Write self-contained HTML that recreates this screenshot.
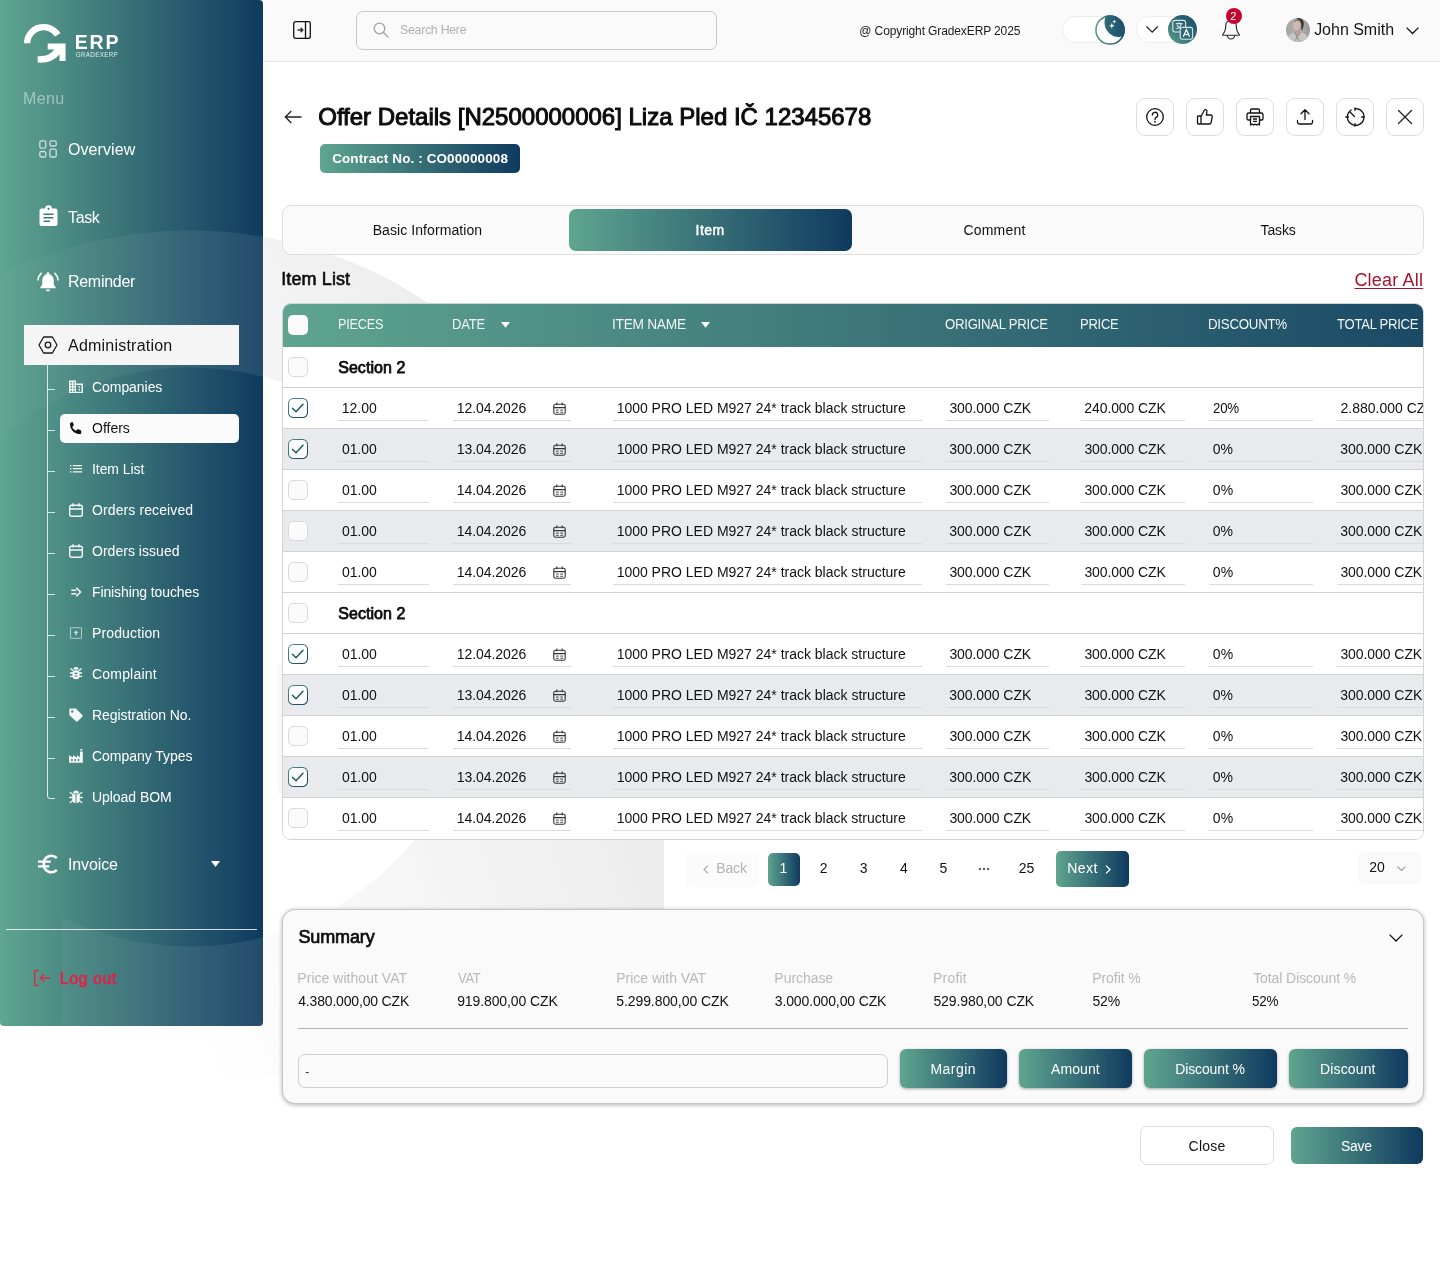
<!DOCTYPE html>
<html><head><meta charset="utf-8"><title>Offer Details</title>
<style>
*{box-sizing:border-box;margin:0;padding:0}
html,body{width:1440px;height:1267px;overflow:hidden;background:#fff}
#root{position:absolute;left:0;top:0;width:1440px;height:1267px;will-change:transform}
body{position:relative;font-family:"Liberation Sans",sans-serif;color:#111}
.a{position:absolute}
.t{position:absolute;white-space:nowrap;line-height:1}
.g{background:linear-gradient(90deg,#5fa58f 0%,#0f3a5f 100%)}
svg{position:absolute;overflow:visible}
#sb{left:0;top:0;width:263px;height:1026px;border-radius:0 4px 4px 4px;background:linear-gradient(90deg,#5fa58f 0%,#0f3a5f 100%);overflow:hidden}
#hd{left:263px;top:0;width:1177px;height:62px;background:#fafafa;border-bottom:1px solid #e6e6e6}
.ul{position:absolute;height:1px;background:#dbdbdb}
.cb{position:absolute;width:20px;height:20px;border:1px solid #dadada;border-radius:5px;background:#fafafa}
.cbc{position:absolute;width:20px;height:20px;border:1.200px solid transparent;border-radius:5.500px;background:linear-gradient(#fff,#fff) padding-box,linear-gradient(135deg,#4f9583 0%,#0f3a5f 100%) border-box}
.btn{position:absolute;border-radius:6px;box-shadow:0 1px 3px rgba(0,0,0,.35)}
.ib{position:absolute;width:38px;height:38px;border:1px solid #dcdcdc;border-radius:9px;background:#fff}
</style></head>
<body>
<div id="root">
<svg class="a" style="left:0;top:0" width="1440" height="1267" viewBox="0 0 1440 1267">
<defs><linearGradient id="wg" gradientUnits="userSpaceOnUse" x1="-30" y1="396" x2="529" y2="200"><stop offset="0" stop-color="#ffffff"/><stop offset="1" stop-color="#e9e9e9"/></linearGradient></defs>
<rect x="-300" y="150" width="1000" height="1000" fill="url(#wg)" clip-path="url(#wc)"/>
<clipPath id="wc"><path d="M23.90 43.25 A19.75 19.75 0 0 1 60.58 33.08 L55.14 36.35 A13.4 13.4 0 0 0 30.25 43.25 Z M37.70 62.08 A19.75 19.75 0 0 0 59.50 55.03 L59.50 61.00 L65.6 61 L65.6 43.6 L47.7 43.6 L47.7 49.6 L55.45 49.60 A13.4 13.4 0 0 1 37.70 55.26 Z" transform="translate(190 657) scale(21.6) translate(-43.65 -43.25)"/></clipPath>
</svg>
<div id="sb" class="a">
<svg style="left:0;top:0" width="263" height="1026" viewBox="0 0 263 1026"><defs><linearGradient id="wg2" gradientUnits="userSpaceOnUse" x1="-80" y1="0" x2="263" y2="0"><stop offset="0" stop-color="#fff" stop-opacity="0"/><stop offset="1" stop-color="#fff" stop-opacity="0.085"/></linearGradient><clipPath id="wc2"><path d="M23.90 43.25 A19.75 19.75 0 0 1 60.58 33.08 L55.14 36.35 A13.4 13.4 0 0 0 30.25 43.25 Z M37.70 62.08 A19.75 19.75 0 0 0 59.50 55.03 L59.50 61.00 L65.6 61 L65.6 43.6 L47.7 43.6 L47.7 49.6 L55.45 49.60 A13.4 13.4 0 0 1 37.70 55.26 Z" transform="translate(190 657) scale(21.6) translate(-43.65 -43.25)"/></clipPath></defs><rect x="-300" y="150" width="1000" height="1000" fill="url(#wg2)" clip-path="url(#wc2)"/></svg>
</div>
<svg style="left:23px;top:23px" width="44" height="41" viewBox="23 23 44 41"><g fill="#fff">
<path d="M23.9 43.200 A19.750 19.750 0 0 1 60.400 33.200 L55.000 36.400 A13.500 13.500 0 0 0 30.200 43.200 Z"/>
<path d="M47.700 43.600 H65.600 V61 H59.500 V54.500 Q52 63.500 37.700 62.600 V56.200 Q49 57 54.200 49.600 H47.700 Z"/>
</g></svg>
<div class="t" style="left:74.86px;top:32.55px;font-size:19.5px;color:#fff;font-weight:bold;letter-spacing:1.736px;">ERP</div>
<div class="t" style="left:75.76px;top:52.45px;font-size:6.3px;color:rgba(255,255,255,.85);letter-spacing:0.310px;">GRADEXERP</div>
<div class="t" style="left:22.99px;top:91.12px;font-size:16px;color:rgba(255,255,255,.45);letter-spacing:0.347px;">Menu</div>
<svg style="left:39px;top:140px" width="18" height="18" viewBox="0 0 18 18" fill="none" stroke="rgba(255,255,255,.72)" stroke-width="1.300"><rect x=".8" y=".8" width="6" height="7.400" rx="1.600"/><rect x="11" y=".8" width="6.200" height="5.200" rx="1.600"/><rect x=".8" y="11.500" width="6" height="5.500" rx="1.600"/><rect x="11" y="9.200" width="6.200" height="7.800" rx="1.600"/></svg>
<div class="t" style="left:68.00px;top:141.71px;font-size:16px;color:#fff;letter-spacing:0.079px;">Overview</div>
<svg style="left:38.500px;top:206px" width="19" height="20" viewBox="0 0 19 20"><path fill="#fff" d="M2.500 2.600h3.600a3.400 3.400 0 0 1 6.800 0h3.600a2 2 0 0 1 2 2V18a2 2 0 0 1-2 2h-14a2 2 0 0 1-2-2V4.600a2 2 0 0 1 2-2z"/><circle cx="9.500" cy="2.800" r="1.100" fill="#3b7a79"/><g stroke="#3b7a79" stroke-width="1.600"><path d="M4.500 8.300h10M4.500 11.800h10M4.500 15.300h6.500"/></g></svg>
<div class="t" style="left:68.00px;top:210.12px;font-size:16px;color:#fff;letter-spacing:-0.348px;">Task</div>
<svg style="left:37px;top:270.600px" width="22" height="22" viewBox="0 0 22 21" preserveAspectRatio="none"><g fill="#fff"><path d="M11 1.200c.8 0 1.400.6 1.400 1.400v.5c2.600.7 4.400 3 4.400 5.900v4.200l1.900 2.200v1H3.300v-1l1.900-2.200V9c0-2.900 1.800-5.200 4.400-5.900v-.5c0-.8.600-1.400 1.400-1.400z"/><path d="M9 17.600h4a2 2 0 0 1-4 0z"/></g><g fill="none" stroke="#fff" stroke-width="1.500" stroke-linecap="round"><path d="M4.300 2.200C2.400 3.700 1.200 6 1 8.600"/><path d="M17.700 2.200c1.900 1.500 3.100 3.800 3.300 6.400"/></g></svg>
<div class="t" style="left:68.00px;top:273.71px;font-size:16px;color:#fff;letter-spacing:-0.290px;">Reminder</div>
<div class="a" style="left:24px;top:325px;width:215px;height:40px;background:#f5f5f5"></div>
<svg style="left:38px;top:336px" width="20" height="18" viewBox="0 0 20 18" fill="none" stroke="#1b1b1b" stroke-width="1.300" stroke-linejoin="round"><path d="M5.600 1 h8.800 l4.600 8 l-4.600 8 h-8.800 l-4.600 -8 z"/><circle cx="10" cy="9" r="2.800"/></svg>
<div class="t" style="left:68.00px;top:338.12px;font-size:16px;color:#161616;letter-spacing:0.219px;">Administration</div>
<div class="a" style="left:47px;top:365px;width:1px;height:430px;background:rgba(255,255,255,.78)"></div>
<div class="a" style="left:47px;top:792px;width:8px;height:7px;border-left:1px solid rgba(255,255,255,.78);border-bottom:1px solid rgba(255,255,255,.78);border-radius:0 0 0 3px"></div>
<div class="a" style="left:47px;top:389px;width:8px;height:1px;background:rgba(255,255,255,.78)"></div>
<svg style="left:69px;top:380.0px" width="14" height="14" viewBox="0 0 14 14"><path fill="#f3f8f6" d="M0 .5h7v3h7V13H0zM1.500 2v1.500H3V2zm2.800 0v1.500h1.500V2zM1.500 4.800v1.500H3V4.800zm2.800 0v1.500h1.500V4.800zM1.500 7.600v1.500H3V7.600zm2.800 0v1.500h1.500V7.600zm-2.800 2.800v1.500H3v-1.500zm2.800 0v1.500h1.500v-1.500zM7 5v6.800h5.500V5zm2.500 1.200h1.500v1.500H9.500zm0 2.800h1.500v1.500H9.500z"/></svg>
<div class="t" style="left:92.00px;top:380.45px;font-size:14px;color:#fff;letter-spacing:-0.057px;">Companies</div>
<div class="a" style="left:60px;top:414px;width:179px;height:29px;background:#fbfbfb;border-radius:5px"></div>
<div class="a" style="left:47px;top:430px;width:8px;height:1px;background:rgba(255,255,255,.78)"></div>
<svg style="left:69px;top:421.0px" width="14" height="14" viewBox="0 0 14 14"><path fill="#111" d="M2.900 .8c.4 0 .7.200.9.600l.9 2.300c.150.400 0 .8-.300 1.100L3.200 6c.8 1.700 2.100 3 3.800 3.800l1.200-1.200c.3-.3.700-.4 1.100-.3l2.300.9c.4.150.6.500.6.900v1.800c0 .6-.5 1.100-1.100 1.100C5.500 13 1 8.500 1 2.900c0-.6.500-1.100 1.100-1.100z"/></svg>
<div class="t" style="left:92.00px;top:421.45px;font-size:14px;color:#111;">Offers</div>
<div class="a" style="left:47px;top:471px;width:8px;height:1px;background:rgba(255,255,255,.78)"></div>
<svg style="left:69px;top:462.0px" width="14" height="14" viewBox="0 0 14 14"><g stroke="#f3f8f6" stroke-width="1.300"><path d="M1 3.600h1.400M3.800 3.600h9.300M1 6.700h1.400M3.800 6.700h9.300M1 9.800h1.400M3.800 9.800h9.300"/></g></svg>
<div class="t" style="left:92.00px;top:462.45px;font-size:14px;color:#fff;letter-spacing:-0.074px;">Item List</div>
<div class="a" style="left:47px;top:512px;width:8px;height:1px;background:rgba(255,255,255,.78)"></div>
<svg style="left:69px;top:503.0px" width="14" height="14" viewBox="0 0 14 14"><g fill="none" stroke="#f3f8f6" stroke-width="1.400"><rect x=".7" y="2.200" width="12.600" height="11" rx="1.800"/><path d="M.7 6h12.600M4 .2v3.300M10 .2v3.300"/></g></svg>
<div class="t" style="left:92.00px;top:503.45px;font-size:14px;color:#fff;letter-spacing:0.105px;">Orders received</div>
<div class="a" style="left:47px;top:553px;width:8px;height:1px;background:rgba(255,255,255,.78)"></div>
<svg style="left:69px;top:544.0px" width="14" height="14" viewBox="0 0 14 14"><g fill="none" stroke="#f3f8f6" stroke-width="1.400"><rect x=".7" y="2.200" width="12.600" height="11" rx="1.800"/><path d="M.7 6h12.600M4 .2v3.300M10 .2v3.300"/></g></svg>
<div class="t" style="left:92.00px;top:544.45px;font-size:14px;color:#fff;letter-spacing:0.028px;">Orders issued</div>
<div class="a" style="left:47px;top:594px;width:8px;height:1px;background:rgba(255,255,255,.78)"></div>
<svg style="left:69px;top:585.0px" width="14" height="14" viewBox="0 0 14 14"><g fill="none" stroke="#f3f8f6" stroke-width="1.600"><path d="M2.300 5.300h5M2.300 8.700h5M7.300 2.800 11.500 7l-4.200 4.200" stroke-linejoin="round"/></g></svg>
<div class="t" style="left:92.00px;top:585.45px;font-size:14px;color:#fff;letter-spacing:-0.111px;">Finishing touches</div>
<div class="a" style="left:47px;top:635px;width:8px;height:1px;background:rgba(255,255,255,.78)"></div>
<svg style="left:69px;top:626.0px" width="14" height="14" viewBox="0 0 14 14"><g fill="none" stroke="#f3f8f6" stroke-opacity=".6" stroke-width="1.100"><rect x="1.500" y="1.800" width="11" height="10.400" rx=".8"/></g><path fill="#f3f8f6" fill-opacity=".8" d="M7 4.500 9.300 7H7.700v2.200H6.300V7H4.700z"/></svg>
<div class="t" style="left:92.00px;top:626.45px;font-size:14px;color:#fff;letter-spacing:0.135px;">Production</div>
<div class="a" style="left:47px;top:676px;width:8px;height:1px;background:rgba(255,255,255,.78)"></div>
<svg style="left:69px;top:667.0px" width="14" height="14" viewBox="0 0 14 14"><g fill="#f3f8f6"><path d="M4.300 2.600a2.700 2.700 0 0 1 5.400 0z"/><rect x="3.400" y="3.300" width="7.200" height="9" rx="3.300"/></g><g stroke="#f3f8f6" stroke-width="1.300" stroke-linecap="round"><path d="M1.800 1.800l2 1.600M12.200 1.800l-2 1.600M1.400 6h2.200M12.600 6h-2.200M1.400 9.300h2.200M12.600 9.300h-2.200"/></g><g stroke="#3f7f7a" stroke-width="1.100"><path d="M5.600 6.400h2.800M5.600 9h2.800"/></g></svg>
<div class="t" style="left:92.00px;top:667.45px;font-size:14px;color:#fff;letter-spacing:0.195px;">Complaint</div>
<div class="a" style="left:47px;top:717px;width:8px;height:1px;background:rgba(255,255,255,.78)"></div>
<svg style="left:69px;top:708.0px" width="14" height="14" viewBox="0 0 14 14"><path fill="#f3f8f6" d="M.3 1.700C.3 1 .8.500 1.500.500h4.800c.4 0 .7.150 1 .4l6 6c.5.500.5 1.300 0 1.800l-4.600 4.600c-.5.500-1.300.5-1.800 0L.8 7.400c-.3-.3-.5-.6-.5-1zM3.300 2.300a1.200 1.200 0 1 0 0 2.400 1.200 1.200 0 0 0 0-2.400z"/></svg>
<div class="t" style="left:92.00px;top:708.45px;font-size:14px;color:#fff;letter-spacing:-0.067px;">Registration No.</div>
<div class="a" style="left:47px;top:758px;width:8px;height:1px;background:rgba(255,255,255,.78)"></div>
<svg style="left:69px;top:749.0px" width="14" height="14" viewBox="0 0 14 14"><path fill="#f3f8f6" d="M0 13.800V6.300l4 2.200V6.300l4 2.200V6.300L11 8V2.500h2.800v11.300zM2.200 10v2h1.500v-2zm3.300 0v2H7v-2zm3.300 0v2h1.500v-2z"/><rect x="11.200" y="0" width="2.200" height="1.600" rx=".5" fill="#f3f8f6"/></svg>
<div class="t" style="left:92.00px;top:749.45px;font-size:14px;color:#fff;letter-spacing:-0.042px;">Company Types</div>
<svg style="left:69px;top:790.0px" width="14" height="14" viewBox="0 0 14 14"><g fill="#f3f8f6"><path d="M4 3.500a3 3 0 0 1 6 0z"/><path d="M3.200 4.300h3.300V13H6C4.300 13 3.200 11.500 3.200 10zM7.500 4.300h3.300V10c0 1.500-1.100 3-2.800 3h-.5z"/></g><g stroke="#f3f8f6" stroke-width="1.300" stroke-linecap="round"><path d="M1.300 2.500l2.200 1.800M12.700 2.500l-2.200 1.800M.8 7.500h2.400M13.200 7.500h-2.400M1.300 12.500l2.200-1.800M12.700 12.500l-2.200-1.800"/></g></svg>
<div class="t" style="left:92.00px;top:790.45px;font-size:14px;color:#fff;letter-spacing:-0.050px;">Upload BOM</div>
<svg style="left:38px;top:855px" width="20" height="18" viewBox="0 0 20 18" fill="none" stroke="#fff" stroke-width="2.600"><path d="M18.800 3.100A7.600 7.600 0 0 0 5.800 9a7.600 7.600 0 0 0 13 5.900"/><path d="M0 6.700h12.800M0 11.300h11.300" stroke-width="2.300"/></svg>
<div class="t" style="left:68.00px;top:857.12px;font-size:16px;color:#fff;letter-spacing:-0.115px;">Invoice</div>
<svg style="left:210.700px;top:860.800px" width="9" height="6" viewBox="0 0 9 6"><path fill="#fff" d="M0 0h9L4.500 6z"/></svg>
<div class="a" style="left:6px;top:929px;width:251px;height:1px;background:rgba(255,255,255,.8)"></div>
<svg style="left:33.500px;top:970px" width="17" height="16" viewBox="0 0 17 16" fill="none" stroke="#e0264c" stroke-width="1.300"><path d="M4.800 .7H.7v14.600h4.100"/><path d="M16 8H6.500M10.300 4.200 6.500 8l3.800 3.800"/></svg>
<div class="t" style="left:59.66px;top:971.05px;font-size:16px;color:#df2349;letter-spacing:0.580px;-webkit-text-stroke:0.65px currentColor;">Log out</div>
<div id="hd" class="a"></div>
<svg style="left:293px;top:21px" width="18" height="18" viewBox="0 0 18 18" fill="none" stroke="#111" stroke-width="1.300"><rect x=".7" y=".7" width="16.600" height="16.600" rx="2"/><path d="M12.500 .7v16.600"/><path d="M4.500 9h5.300M7.600 6.800 9.800 9l-2.200 2.200" stroke="#333" stroke-width="1.400"/></svg>
<div class="a" style="left:356px;top:10.500px;width:361px;height:39.500px;border:1px solid #c9c9c9;border-radius:7px;background:#fafafa"></div>
<svg style="left:373px;top:22px" width="16" height="16" viewBox="0 0 16 16" fill="none" stroke="#a3a3a3" stroke-width="1.300" stroke-linecap="round"><circle cx="6.500" cy="6.500" r="5.300"/><path d="M10.500 10.500 15 15"/></svg>
<div class="t" style="left:399.78px;top:24.15px;font-size:12.5px;color:#b0b0b0;letter-spacing:-0.250px;transform:scaleX(0.9831);transform-origin:0 0;">Search Here</div>
<div class="t" style="left:859.32px;top:25.35px;font-size:12px;color:#1a1a1a;letter-spacing:-0.118px;">@ Copyright GradexERP 2025</div>
<div class="a" style="left:1062px;top:15.500px;width:62px;height:27.500px;border-radius:14px;background:#fff;border:1px solid #ececec"></div>
<svg style="left:1094.500px;top:14.600px" width="30" height="30" viewBox="0 0 30 30"><defs><linearGradient id="mg" x1="0" x2="1"><stop offset="0" stop-color="#4f9583"/><stop offset="1" stop-color="#12426a"/></linearGradient><clipPath id="mc"><circle cx="15" cy="15" r="14.800"/></clipPath></defs><circle cx="15" cy="15" r="14.100" fill="#fff" stroke="url(#mg)" stroke-width="1.500"/><linearGradient id="mg2" x1="0" x2="1"><stop offset="0" stop-color="#2f6d75"/><stop offset="1" stop-color="#12426a"/></linearGradient><g clip-path="url(#mc)"><circle cx="23.800" cy="7.600" r="14.300" fill="url(#mg2)"/></g><path d="M19.300 4.600l.55 1.500 1.500.55-1.500.55-.55 1.500-.55-1.500-1.500-.55 1.500-.55z" fill="#fff"/><path d="M16.800 8l.8 2 2 .8-2 .8-.8 2-.8-2-2-.8 2-.8z" fill="#fff"/></svg>
<div class="a" style="left:1136px;top:16px;width:61px;height:27px;border-radius:14px;background:#fff;border:1px solid #ececec"></div>
<svg style="left:1146px;top:26.200px" width="12.400" height="6.800" viewBox="0 0 12.400 6.800" fill="none" stroke="#222" stroke-width="1.300"><path d="M.5.500 6.200 6.100 11.900.5"/></svg>
<svg style="left:1168px;top:15px" width="29" height="29" viewBox="0 0 29 29"><defs><linearGradient id="lg" x1="0" y1="1" x2="1" y2="0"><stop offset="0" stop-color="#5aa38c"/><stop offset=".55" stop-color="#2f6b78"/><stop offset="1" stop-color="#154669"/></linearGradient></defs><circle cx="14.500" cy="14.500" r="14.500" fill="url(#lg)"/><g fill="none" stroke="rgba(255,255,255,.82)" stroke-width="1.100"><rect x="4.800" y="5.400" width="12.800" height="11.600" rx="2.200"/><path d="M7.800 8.600h6.800M11.200 7.200v1.400M13.300 8.600c-.6 2.600-2.400 4.400-5 5.200M9 10c.8 1.600 2.200 2.800 3.800 3.400"/><rect x="12.200" y="12.400" width="12.400" height="11.800" rx="2.200" fill="#2e6a78"/><path d="M15.300 21.800 18.400 14.600l3.100 7.200M16.300 19.500h4.200" stroke="#fff" stroke-width="1.200"/></g></svg>
<svg style="left:1221px;top:18px" width="20" height="23" viewBox="0 0 20 23" fill="none" stroke="#2a2a2a" stroke-width="1.150" stroke-linejoin="round"><path d="M10 2.200c3.200 0 5.300 2.500 5.300 5.600 0 1.600.2 3.300.7 4.800.4 1.200 1.200 2.600 2.300 3.900.2.300.1.700-.3.700H2c-.4 0-.5-.4-.3-.7 1.100-1.300 1.900-2.700 2.300-3.900.5-1.500.7-3.200.7-4.800 0-3.100 2.100-5.600 5.300-5.600z"/><path d="M6.300 17.300a3.700 3.700 0 0 0 7.400 0"/></svg>
<div class="a" style="left:1225.700px;top:8px;width:16px;height:16px;border-radius:8px;background:#c4062f"></div>
<div class="t" style="left:1230.14px;top:11.00px;font-size:11px;color:#fff;">2</div>
<svg style="left:1286px;top:18px" width="24" height="24" viewBox="0 0 24 24"><defs><clipPath id="av"><circle cx="12" cy="12" r="12"/></clipPath><linearGradient id="avg" x1="0" x2="1"><stop offset="0" stop-color="#a4a4a4"/><stop offset=".5" stop-color="#b4b3b2"/><stop offset="1" stop-color="#9b9a99"/></linearGradient></defs><g clip-path="url(#av)"><rect width="24" height="24" fill="url(#avg)"/><path d="M10.500 .3c3.500-1 7.500.8 7.300 5.700-.1 3-1.300 5.200-2.300 6.800l-.6-6.300c-.2-3-1.800-5-4.400-6.200z" fill="#3a3330"/><ellipse cx="11.600" cy="7.800" rx="3.900" ry="5.700" fill="#a78f85"/><ellipse cx="10.700" cy="7.600" rx="3.700" ry="5.600" fill="#cdb9ae"/><path d="M8 5.200c.3-2.800 1.800-4 3.700-4 2 0 3 1 3.300 2.600-1-1-2.200-1.400-3.500-1.300-1.600.1-2.800 1-3.500 2.700z" fill="#6a5a52"/><path d="M9 12.300h4.300l.4 4-2.500 2.500-2.500-2.500z" fill="#b9a196"/><path d="M.5 24c.5-5.500 3.500-8.600 8-9.400l2.700 4.200 3.200-4.600c5 .8 8.300 4.200 9 9.800z" fill="#c6c6c4"/><path d="M8.500 14.600l2.700 4.200-2 4M14.400 14.200l-3.200 4.600 2.500 4.500" fill="none" stroke="#868683" stroke-width=".9"/></g></svg>
<div class="t" style="left:1314.15px;top:21.95px;font-size:16px;color:#161616;letter-spacing:-0.017px;">John Smith</div>
<svg style="left:1406px;top:26.500px" width="13" height="8" viewBox="0 0 13 8" fill="none" stroke="#111" stroke-width="1.300"><path d="M.6.600 6.500 6.500 12.400.6"/></svg>
<svg style="left:284px;top:110px" width="18" height="14" viewBox="0 0 18 14" fill="none" stroke="#222" stroke-width="1.300"><path d="M17.500 7H1.500M7.300 1 1.300 7l6 6"/></svg>
<div class="t" style="left:318.22px;top:104.90px;font-size:24px;color:#0c0c0c;letter-spacing:-0.004px;-webkit-text-stroke:1.0px currentColor;">Offer Details [N2500000006] Liza Pled IČ 12345678</div>
<div class="a g" style="left:320px;top:144px;width:200px;height:29px;border-radius:5px"></div>
<div class="t" style="left:332.15px;top:152.21px;font-size:13.5px;color:#fff;font-weight:bold;letter-spacing:0.102px;">Contract No. : CO00000008</div>
<div class="ib" style="left:1136px;top:97.500px"></div>
<svg style="left:1145px;top:106.500px" width="20" height="20" viewBox="0 0 20 20"><g fill="none" stroke="#111" stroke-width="1.300"><circle cx="10" cy="10" r="8.300"/><path d="M7.300 8a2.700 2.700 0 1 1 3.900 2.400c-.8.400-1.200.9-1.200 1.800v.4" stroke-linecap="round"/></g><circle cx="10" cy="14.800" r=".9" fill="#111"/></svg>
<div class="ib" style="left:1186px;top:97.500px"></div>
<svg style="left:1195px;top:106.500px" width="20" height="20" viewBox="0 0 20 20"><g fill="none" stroke="#111" stroke-width="1.300" stroke-linejoin="round"><rect x="2.500" y="9" width="3.500" height="8" rx=".8"/><path d="M6 9.500 9.300 3.300c.3-.7 1-.9 1.600-.6.900.4 1.200 1.300 1 2.200L11.300 8h4.400c1 0 1.700.9 1.500 1.900l-1.100 5.600c-.2.900-.9 1.500-1.800 1.500H6"/></g></svg>
<div class="ib" style="left:1236px;top:97.500px"></div>
<svg style="left:1245px;top:106.500px" width="20" height="20" viewBox="0 0 20 20"><g fill="none" stroke="#111" stroke-width="1.300" stroke-linejoin="round"><path d="M5.500 6V3.300c0-.7.500-1.300 1.200-1.300h6.600c.7 0 1.200.6 1.200 1.300V6"/><path d="M5 13H3.300C2.600 13 2 12.400 2 11.700V7.800C2 6.800 2.800 6 3.800 6h12.400c1 0 1.800.8 1.800 1.800v3.900c0 .7-.6 1.300-1.300 1.300H15"/><path d="M5.500 9.500h9V18l-1.500-.9-1.500.9-1.500-.9L8.500 18 7 17.100 5.500 18z"/><path d="M8 12h4M8 14.300h4"/></g></svg>
<div class="ib" style="left:1286px;top:97.500px"></div>
<svg style="left:1295px;top:106.500px" width="20" height="20" viewBox="0 0 20 20"><g fill="none" stroke="#111" stroke-width="1.300" stroke-linecap="round" stroke-linejoin="round"><path d="M10 12.500V3M6 6.800 10 2.800l4 4"/><path d="M2.500 13.500v1.700c0 1 .8 1.800 1.800 1.800h11.400c1 0 1.800-.8 1.800-1.800v-1.700"/></g></svg>
<div class="ib" style="left:1336px;top:97.500px"></div>
<svg style="left:1345px;top:106.500px" width="20" height="20" viewBox="0 0 20 20"><g fill="none" stroke="#111" stroke-width="1.300" stroke-linecap="round"><path d="M6.200 3A8.300 8.300 0 1 0 10 1.700"/><path d="M10 .8v2.600M10 16.600v2.600M.8 10h2.600M16.600 10h2.600M5 5l4.500 4.500"/></g></svg>
<div class="ib" style="left:1386px;top:97.500px"></div>
<svg style="left:1395px;top:106.500px" width="20" height="20" viewBox="0 0 20 20"><g fill="none" stroke="#222" stroke-width="1.300" stroke-linecap="round"><path d="M3.500 3.500l13 13M16.500 3.500l-13 13"/></g></svg>
<div class="a" style="left:282px;top:205px;width:1142px;height:50px;border:1px solid #dedede;border-radius:9px;background:#fafafa"></div>
<div class="a g" style="left:569px;top:209px;width:283px;height:42px;border-radius:7px"></div>
<div class="t" style="left:372.64px;top:222.80px;font-size:14px;color:#111;letter-spacing:0.083px;">Basic Information</div>
<div class="t" style="left:695.60px;top:222.80px;font-size:14px;color:#fff;letter-spacing:0.441px;-webkit-text-stroke:0.45px currentColor;">Item</div>
<div class="t" style="left:963.56px;top:222.80px;font-size:14px;color:#111;letter-spacing:0.173px;">Comment</div>
<div class="t" style="left:1260.56px;top:222.80px;font-size:14px;color:#111;letter-spacing:-0.120px;">Tasks</div>
<div class="t" style="left:281.23px;top:270.43px;font-size:18px;color:#0c0c0c;letter-spacing:0.108px;-webkit-text-stroke:0.6px currentColor;">Item List</div>
<div class="t" style="left:1354.42px;top:270.80px;font-size:18px;color:#a8122f;letter-spacing:0.194px;text-decoration:underline;text-underline-offset:2px;text-decoration-thickness:1px;">Clear All</div>
<div class="a" style="left:282px;top:303px;width:1142px;height:537px;border:1px solid #d4d4d4;border-radius:9px;background:#fff;overflow:hidden">
<div class="a g" style="left:-1px;top:-1px;width:1335px;height:44px"></div>
<div class="a" style="left:5px;top:11px;width:20px;height:20px;border-radius:5px;background:#fbfbfb"></div>
<div class="t" style="left:54.52px;top:13.41px;font-size:14px;color:#f1f5f4;letter-spacing:-0.280px;transform:scaleX(0.9080);transform-origin:0 0;">PIECES</div>
<div class="t" style="left:169.18px;top:13.41px;font-size:14px;color:#f1f5f4;letter-spacing:-0.280px;transform:scaleX(0.9348);transform-origin:0 0;">DATE</div>
<div class="t" style="left:329.25px;top:13.41px;font-size:14px;color:#f1f5f4;letter-spacing:-0.280px;transform:scaleX(0.9802);transform-origin:0 0;">ITEM NAME</div>
<div class="t" style="left:662.30px;top:13.41px;font-size:14px;color:#f1f5f4;letter-spacing:-0.280px;transform:scaleX(0.9409);transform-origin:0 0;">ORIGINAL PRICE</div>
<div class="t" style="left:796.58px;top:13.41px;font-size:14px;color:#f1f5f4;letter-spacing:-0.280px;transform:scaleX(0.9308);transform-origin:0 0;">PRICE</div>
<div class="t" style="left:925.47px;top:13.41px;font-size:14px;color:#f1f5f4;letter-spacing:-0.280px;transform:scaleX(0.9506);transform-origin:0 0;">DISCOUNT%</div>
<div class="t" style="left:1053.50px;top:13.41px;font-size:14px;color:#f1f5f4;letter-spacing:-0.280px;transform:scaleX(0.9346);transform-origin:0 0;">TOTAL PRICE</div>
<svg style="left:217.7px;top:18.19999999999999px" width="9" height="6" viewBox="0 0 9 6"><path fill="#fff" d="M0 0h9L4.500 5.700z"/></svg>
<svg style="left:417.70000000000005px;top:18.19999999999999px" width="9" height="6" viewBox="0 0 9 6"><path fill="#fff" d="M0 0h9L4.500 5.700z"/></svg>
<div class="a" style="left:-1px;top:43px;width:1142px;height:41px;background:#fff;border-bottom:1px solid #d2d2d2"></div>
<div class="cb" style="left:5px;top:53px"></div>
<div class="t" style="left:55.17px;top:55.95px;font-size:16px;color:#0c0c0c;letter-spacing:0.053px;-webkit-text-stroke:0.75px currentColor;">Section 2</div>
<div class="a" style="left:-1px;top:84px;width:1142px;height:41px;background:#fff;border-bottom:1px solid #d2d2d2"></div>
<div class="cbc" style="left:5px;top:94px"></div>
<svg style="left:5px;top:94px" width="20" height="20" viewBox="0 0 20 20"><path d="M4.500 10.300l3.500 3.500 7-7.600" fill="none" stroke="#1f5a66" stroke-width="1.500" stroke-linecap="round" stroke-linejoin="round"/></svg>
<div class="t" style="left:58.72px;top:96.70px;font-size:14px;color:#111;letter-spacing:-0.004px;">12.00</div>
<div class="ul" style="left:55px;top:116px;width:91px"></div>
<div class="t" style="left:173.72px;top:96.70px;font-size:14px;color:#111;letter-spacing:-0.062px;">12.04.2026</div>
<div class="ul" style="left:170px;top:116px;width:118px"></div>
<div class="t" style="left:333.63px;top:96.70px;font-size:14px;color:#111;letter-spacing:-0.008px;">1000 PRO LED M927 24* track black structure</div>
<div class="ul" style="left:330px;top:116px;width:309px"></div>
<div class="t" style="left:666.39px;top:96.70px;font-size:14px;color:#111;letter-spacing:-0.067px;">300.000 CZK</div>
<div class="ul" style="left:663px;top:116px;width:103px"></div>
<div class="t" style="left:801.36px;top:96.70px;font-size:14px;color:#111;letter-spacing:-0.104px;">240.000 CZK</div>
<div class="ul" style="left:798px;top:116px;width:104px"></div>
<div class="t" style="left:929.67px;top:96.70px;font-size:14px;color:#111;letter-spacing:-0.280px;transform:scaleX(0.9500);transform-origin:0 0;">20%</div>
<div class="ul" style="left:926px;top:116px;width:104px"></div>
<div class="t" style="left:1057.48px;top:96.70px;font-size:14px;color:#111;">2.880.000 CZK</div>
<div class="ul" style="left:1054px;top:116px;width:104px"></div>
<svg style="left:269.5px;top:98.30000000000001px" width="13" height="13" viewBox="0 0 13 13"><g fill="none" stroke="#333" stroke-width="1.100"><rect x=".8" y="2.200" width="11.400" height="10" rx="1.600"/><path d="M.8 5.600h11.400M3.800 .5v2.800M9.200 .5v2.800"/><path d="M3 8.100h2.700M7.300 8.100H10M3 10.300h2.700M7.300 10.300H10" stroke-width=".9"/></g></svg>
<div class="a" style="left:-1px;top:125px;width:1142px;height:41px;background:#e8eaed;border-bottom:1px solid #d2d2d2"></div>
<div class="cbc" style="left:5px;top:135px"></div>
<svg style="left:5px;top:135px" width="20" height="20" viewBox="0 0 20 20"><path d="M4.500 10.300l3.500 3.500 7-7.600" fill="none" stroke="#1f5a66" stroke-width="1.500" stroke-linecap="round" stroke-linejoin="round"/></svg>
<div class="t" style="left:58.91px;top:137.70px;font-size:14px;color:#111;letter-spacing:-0.054px;">01.00</div>
<div class="ul" style="left:55px;top:157px;width:91px"></div>
<div class="t" style="left:173.72px;top:137.70px;font-size:14px;color:#111;letter-spacing:-0.051px;">13.04.2026</div>
<div class="ul" style="left:170px;top:157px;width:118px"></div>
<div class="t" style="left:333.63px;top:137.70px;font-size:14px;color:#111;letter-spacing:-0.007px;">1000 PRO LED M927 24* track black structure</div>
<div class="ul" style="left:330px;top:157px;width:309px"></div>
<div class="t" style="left:666.37px;top:137.70px;font-size:14px;color:#111;letter-spacing:-0.061px;">300.000 CZK</div>
<div class="ul" style="left:663px;top:157px;width:103px"></div>
<div class="t" style="left:801.40px;top:137.70px;font-size:14px;color:#111;letter-spacing:-0.104px;">300.000 CZK</div>
<div class="ul" style="left:798px;top:157px;width:104px"></div>
<div class="t" style="left:929.84px;top:137.70px;font-size:14px;color:#111;">0%</div>
<div class="ul" style="left:926px;top:157px;width:104px"></div>
<div class="t" style="left:1057.37px;top:137.70px;font-size:14px;color:#111;letter-spacing:-0.061px;">300.000 CZK</div>
<div class="ul" style="left:1054px;top:157px;width:104px"></div>
<svg style="left:269.5px;top:139.3px" width="13" height="13" viewBox="0 0 13 13"><g fill="none" stroke="#333" stroke-width="1.100"><rect x=".8" y="2.200" width="11.400" height="10" rx="1.600"/><path d="M.8 5.600h11.400M3.800 .5v2.800M9.200 .5v2.800"/><path d="M3 8.100h2.700M7.300 8.100H10M3 10.300h2.700M7.300 10.300H10" stroke-width=".9"/></g></svg>
<div class="a" style="left:-1px;top:166px;width:1142px;height:41px;background:#fff;border-bottom:1px solid #d2d2d2"></div>
<div class="cb" style="left:5px;top:176px"></div>
<div class="t" style="left:59.03px;top:178.70px;font-size:14px;color:#111;letter-spacing:-0.079px;">01.00</div>
<div class="ul" style="left:55px;top:198px;width:91px"></div>
<div class="t" style="left:173.72px;top:178.70px;font-size:14px;color:#111;letter-spacing:-0.062px;">14.04.2026</div>
<div class="ul" style="left:170px;top:198px;width:118px"></div>
<div class="t" style="left:333.63px;top:178.70px;font-size:14px;color:#111;letter-spacing:-0.008px;">1000 PRO LED M927 24* track black structure</div>
<div class="ul" style="left:330px;top:198px;width:309px"></div>
<div class="t" style="left:666.39px;top:178.70px;font-size:14px;color:#111;letter-spacing:-0.067px;">300.000 CZK</div>
<div class="ul" style="left:663px;top:198px;width:103px"></div>
<div class="t" style="left:801.42px;top:178.70px;font-size:14px;color:#111;letter-spacing:-0.110px;">300.000 CZK</div>
<div class="ul" style="left:798px;top:198px;width:104px"></div>
<div class="t" style="left:929.85px;top:178.70px;font-size:14px;color:#111;">0%</div>
<div class="ul" style="left:926px;top:198px;width:104px"></div>
<div class="t" style="left:1057.39px;top:178.70px;font-size:14px;color:#111;letter-spacing:-0.067px;">300.000 CZK</div>
<div class="ul" style="left:1054px;top:198px;width:104px"></div>
<svg style="left:269.5px;top:180.3px" width="13" height="13" viewBox="0 0 13 13"><g fill="none" stroke="#333" stroke-width="1.100"><rect x=".8" y="2.200" width="11.400" height="10" rx="1.600"/><path d="M.8 5.600h11.400M3.800 .5v2.800M9.200 .5v2.800"/><path d="M3 8.100h2.700M7.300 8.100H10M3 10.300h2.700M7.300 10.300H10" stroke-width=".9"/></g></svg>
<div class="a" style="left:-1px;top:207px;width:1142px;height:41px;background:#e8eaed;border-bottom:1px solid #d2d2d2"></div>
<div class="cb" style="left:5px;top:217px"></div>
<div class="t" style="left:58.91px;top:219.70px;font-size:14px;color:#111;letter-spacing:-0.054px;">01.00</div>
<div class="ul" style="left:55px;top:239px;width:91px"></div>
<div class="t" style="left:173.72px;top:219.70px;font-size:14px;color:#111;letter-spacing:-0.051px;">14.04.2026</div>
<div class="ul" style="left:170px;top:239px;width:118px"></div>
<div class="t" style="left:333.63px;top:219.70px;font-size:14px;color:#111;letter-spacing:-0.007px;">1000 PRO LED M927 24* track black structure</div>
<div class="ul" style="left:330px;top:239px;width:309px"></div>
<div class="t" style="left:666.37px;top:219.70px;font-size:14px;color:#111;letter-spacing:-0.061px;">300.000 CZK</div>
<div class="ul" style="left:663px;top:239px;width:103px"></div>
<div class="t" style="left:801.40px;top:219.70px;font-size:14px;color:#111;letter-spacing:-0.104px;">300.000 CZK</div>
<div class="ul" style="left:798px;top:239px;width:104px"></div>
<div class="t" style="left:929.84px;top:219.70px;font-size:14px;color:#111;">0%</div>
<div class="ul" style="left:926px;top:239px;width:104px"></div>
<div class="t" style="left:1057.37px;top:219.70px;font-size:14px;color:#111;letter-spacing:-0.061px;">300.000 CZK</div>
<div class="ul" style="left:1054px;top:239px;width:104px"></div>
<svg style="left:269.5px;top:221.29999999999995px" width="13" height="13" viewBox="0 0 13 13"><g fill="none" stroke="#333" stroke-width="1.100"><rect x=".8" y="2.200" width="11.400" height="10" rx="1.600"/><path d="M.8 5.600h11.400M3.800 .5v2.800M9.200 .5v2.800"/><path d="M3 8.100h2.700M7.300 8.100H10M3 10.300h2.700M7.300 10.300H10" stroke-width=".9"/></g></svg>
<div class="a" style="left:-1px;top:248px;width:1142px;height:41px;background:#fff;border-bottom:1px solid #d2d2d2"></div>
<div class="cb" style="left:5px;top:258px"></div>
<div class="t" style="left:59.03px;top:260.70px;font-size:14px;color:#111;letter-spacing:-0.079px;">01.00</div>
<div class="ul" style="left:55px;top:280px;width:91px"></div>
<div class="t" style="left:173.72px;top:260.70px;font-size:14px;color:#111;letter-spacing:-0.062px;">14.04.2026</div>
<div class="ul" style="left:170px;top:280px;width:118px"></div>
<div class="t" style="left:333.63px;top:260.70px;font-size:14px;color:#111;letter-spacing:-0.008px;">1000 PRO LED M927 24* track black structure</div>
<div class="ul" style="left:330px;top:280px;width:309px"></div>
<div class="t" style="left:666.39px;top:260.70px;font-size:14px;color:#111;letter-spacing:-0.067px;">300.000 CZK</div>
<div class="ul" style="left:663px;top:280px;width:103px"></div>
<div class="t" style="left:801.42px;top:260.70px;font-size:14px;color:#111;letter-spacing:-0.110px;">300.000 CZK</div>
<div class="ul" style="left:798px;top:280px;width:104px"></div>
<div class="t" style="left:929.85px;top:260.70px;font-size:14px;color:#111;">0%</div>
<div class="ul" style="left:926px;top:280px;width:104px"></div>
<div class="t" style="left:1057.39px;top:260.70px;font-size:14px;color:#111;letter-spacing:-0.067px;">300.000 CZK</div>
<div class="ul" style="left:1054px;top:280px;width:104px"></div>
<svg style="left:269.5px;top:262.29999999999995px" width="13" height="13" viewBox="0 0 13 13"><g fill="none" stroke="#333" stroke-width="1.100"><rect x=".8" y="2.200" width="11.400" height="10" rx="1.600"/><path d="M.8 5.600h11.400M3.800 .5v2.800M9.200 .5v2.800"/><path d="M3 8.100h2.700M7.300 8.100H10M3 10.300h2.700M7.300 10.300H10" stroke-width=".9"/></g></svg>
<div class="a" style="left:-1px;top:289px;width:1142px;height:41px;background:#fff;border-bottom:1px solid #d2d2d2"></div>
<div class="cb" style="left:5px;top:299px"></div>
<div class="t" style="left:55.17px;top:301.95px;font-size:16px;color:#0c0c0c;letter-spacing:0.078px;-webkit-text-stroke:0.75px currentColor;">Section 2</div>
<div class="a" style="left:-1px;top:330px;width:1142px;height:41px;background:#fff;border-bottom:1px solid #d2d2d2"></div>
<div class="cbc" style="left:5px;top:340px"></div>
<svg style="left:5px;top:340px" width="20" height="20" viewBox="0 0 20 20"><path d="M4.500 10.300l3.500 3.500 7-7.600" fill="none" stroke="#1f5a66" stroke-width="1.500" stroke-linecap="round" stroke-linejoin="round"/></svg>
<div class="t" style="left:59.03px;top:342.70px;font-size:14px;color:#111;letter-spacing:-0.079px;">01.00</div>
<div class="ul" style="left:55px;top:362px;width:91px"></div>
<div class="t" style="left:173.72px;top:342.70px;font-size:14px;color:#111;letter-spacing:-0.062px;">12.04.2026</div>
<div class="ul" style="left:170px;top:362px;width:118px"></div>
<div class="t" style="left:333.63px;top:342.70px;font-size:14px;color:#111;letter-spacing:-0.008px;">1000 PRO LED M927 24* track black structure</div>
<div class="ul" style="left:330px;top:362px;width:309px"></div>
<div class="t" style="left:666.39px;top:342.70px;font-size:14px;color:#111;letter-spacing:-0.067px;">300.000 CZK</div>
<div class="ul" style="left:663px;top:362px;width:103px"></div>
<div class="t" style="left:801.42px;top:342.70px;font-size:14px;color:#111;letter-spacing:-0.110px;">300.000 CZK</div>
<div class="ul" style="left:798px;top:362px;width:104px"></div>
<div class="t" style="left:929.85px;top:342.70px;font-size:14px;color:#111;">0%</div>
<div class="ul" style="left:926px;top:362px;width:104px"></div>
<div class="t" style="left:1057.39px;top:342.70px;font-size:14px;color:#111;letter-spacing:-0.067px;">300.000 CZK</div>
<div class="ul" style="left:1054px;top:362px;width:104px"></div>
<svg style="left:269.5px;top:344.29999999999995px" width="13" height="13" viewBox="0 0 13 13"><g fill="none" stroke="#333" stroke-width="1.100"><rect x=".8" y="2.200" width="11.400" height="10" rx="1.600"/><path d="M.8 5.600h11.400M3.800 .5v2.800M9.200 .5v2.800"/><path d="M3 8.100h2.700M7.300 8.100H10M3 10.300h2.700M7.300 10.300H10" stroke-width=".9"/></g></svg>
<div class="a" style="left:-1px;top:371px;width:1142px;height:41px;background:#e8eaed;border-bottom:1px solid #d2d2d2"></div>
<div class="cbc" style="left:5px;top:381px"></div>
<svg style="left:5px;top:381px" width="20" height="20" viewBox="0 0 20 20"><path d="M4.500 10.300l3.500 3.500 7-7.600" fill="none" stroke="#1f5a66" stroke-width="1.500" stroke-linecap="round" stroke-linejoin="round"/></svg>
<div class="t" style="left:58.91px;top:383.70px;font-size:14px;color:#111;letter-spacing:-0.054px;">01.00</div>
<div class="ul" style="left:55px;top:403px;width:91px"></div>
<div class="t" style="left:173.72px;top:383.70px;font-size:14px;color:#111;letter-spacing:-0.051px;">13.04.2026</div>
<div class="ul" style="left:170px;top:403px;width:118px"></div>
<div class="t" style="left:333.63px;top:383.70px;font-size:14px;color:#111;letter-spacing:-0.007px;">1000 PRO LED M927 24* track black structure</div>
<div class="ul" style="left:330px;top:403px;width:309px"></div>
<div class="t" style="left:666.37px;top:383.70px;font-size:14px;color:#111;letter-spacing:-0.061px;">300.000 CZK</div>
<div class="ul" style="left:663px;top:403px;width:103px"></div>
<div class="t" style="left:801.40px;top:383.70px;font-size:14px;color:#111;letter-spacing:-0.104px;">300.000 CZK</div>
<div class="ul" style="left:798px;top:403px;width:104px"></div>
<div class="t" style="left:929.84px;top:383.70px;font-size:14px;color:#111;">0%</div>
<div class="ul" style="left:926px;top:403px;width:104px"></div>
<div class="t" style="left:1057.37px;top:383.70px;font-size:14px;color:#111;letter-spacing:-0.061px;">300.000 CZK</div>
<div class="ul" style="left:1054px;top:403px;width:104px"></div>
<svg style="left:269.5px;top:385.29999999999995px" width="13" height="13" viewBox="0 0 13 13"><g fill="none" stroke="#333" stroke-width="1.100"><rect x=".8" y="2.200" width="11.400" height="10" rx="1.600"/><path d="M.8 5.600h11.400M3.800 .5v2.800M9.200 .5v2.800"/><path d="M3 8.100h2.700M7.300 8.100H10M3 10.300h2.700M7.300 10.300H10" stroke-width=".9"/></g></svg>
<div class="a" style="left:-1px;top:412px;width:1142px;height:41px;background:#fff;border-bottom:1px solid #d2d2d2"></div>
<div class="cb" style="left:5px;top:422px"></div>
<div class="t" style="left:59.03px;top:424.70px;font-size:14px;color:#111;letter-spacing:-0.079px;">01.00</div>
<div class="ul" style="left:55px;top:444px;width:91px"></div>
<div class="t" style="left:173.72px;top:424.70px;font-size:14px;color:#111;letter-spacing:-0.062px;">14.04.2026</div>
<div class="ul" style="left:170px;top:444px;width:118px"></div>
<div class="t" style="left:333.63px;top:424.70px;font-size:14px;color:#111;letter-spacing:-0.008px;">1000 PRO LED M927 24* track black structure</div>
<div class="ul" style="left:330px;top:444px;width:309px"></div>
<div class="t" style="left:666.39px;top:424.70px;font-size:14px;color:#111;letter-spacing:-0.067px;">300.000 CZK</div>
<div class="ul" style="left:663px;top:444px;width:103px"></div>
<div class="t" style="left:801.42px;top:424.70px;font-size:14px;color:#111;letter-spacing:-0.110px;">300.000 CZK</div>
<div class="ul" style="left:798px;top:444px;width:104px"></div>
<div class="t" style="left:929.85px;top:424.70px;font-size:14px;color:#111;">0%</div>
<div class="ul" style="left:926px;top:444px;width:104px"></div>
<div class="t" style="left:1057.39px;top:424.70px;font-size:14px;color:#111;letter-spacing:-0.067px;">300.000 CZK</div>
<div class="ul" style="left:1054px;top:444px;width:104px"></div>
<svg style="left:269.5px;top:426.29999999999995px" width="13" height="13" viewBox="0 0 13 13"><g fill="none" stroke="#333" stroke-width="1.100"><rect x=".8" y="2.200" width="11.400" height="10" rx="1.600"/><path d="M.8 5.600h11.400M3.800 .5v2.800M9.200 .5v2.800"/><path d="M3 8.100h2.700M7.300 8.100H10M3 10.300h2.700M7.300 10.300H10" stroke-width=".9"/></g></svg>
<div class="a" style="left:-1px;top:453px;width:1142px;height:41px;background:#e8eaed;border-bottom:1px solid #d2d2d2"></div>
<div class="cbc" style="left:5px;top:463px"></div>
<svg style="left:5px;top:463px" width="20" height="20" viewBox="0 0 20 20"><path d="M4.500 10.300l3.500 3.500 7-7.600" fill="none" stroke="#1f5a66" stroke-width="1.500" stroke-linecap="round" stroke-linejoin="round"/></svg>
<div class="t" style="left:58.91px;top:465.70px;font-size:14px;color:#111;letter-spacing:-0.054px;">01.00</div>
<div class="ul" style="left:55px;top:485px;width:91px"></div>
<div class="t" style="left:173.72px;top:465.70px;font-size:14px;color:#111;letter-spacing:-0.051px;">13.04.2026</div>
<div class="ul" style="left:170px;top:485px;width:118px"></div>
<div class="t" style="left:333.63px;top:465.70px;font-size:14px;color:#111;letter-spacing:-0.007px;">1000 PRO LED M927 24* track black structure</div>
<div class="ul" style="left:330px;top:485px;width:309px"></div>
<div class="t" style="left:666.37px;top:465.70px;font-size:14px;color:#111;letter-spacing:-0.061px;">300.000 CZK</div>
<div class="ul" style="left:663px;top:485px;width:103px"></div>
<div class="t" style="left:801.40px;top:465.70px;font-size:14px;color:#111;letter-spacing:-0.104px;">300.000 CZK</div>
<div class="ul" style="left:798px;top:485px;width:104px"></div>
<div class="t" style="left:929.84px;top:465.70px;font-size:14px;color:#111;">0%</div>
<div class="ul" style="left:926px;top:485px;width:104px"></div>
<div class="t" style="left:1057.37px;top:465.70px;font-size:14px;color:#111;letter-spacing:-0.061px;">300.000 CZK</div>
<div class="ul" style="left:1054px;top:485px;width:104px"></div>
<svg style="left:269.5px;top:467.29999999999995px" width="13" height="13" viewBox="0 0 13 13"><g fill="none" stroke="#333" stroke-width="1.100"><rect x=".8" y="2.200" width="11.400" height="10" rx="1.600"/><path d="M.8 5.600h11.400M3.800 .5v2.800M9.200 .5v2.800"/><path d="M3 8.100h2.700M7.300 8.100H10M3 10.300h2.700M7.300 10.300H10" stroke-width=".9"/></g></svg>
<div class="a" style="left:-1px;top:494px;width:1142px;height:41px;background:#fff;"></div>
<div class="cb" style="left:5px;top:504px"></div>
<div class="t" style="left:59.03px;top:506.70px;font-size:14px;color:#111;letter-spacing:-0.079px;">01.00</div>
<div class="ul" style="left:55px;top:526px;width:91px"></div>
<div class="t" style="left:173.72px;top:506.70px;font-size:14px;color:#111;letter-spacing:-0.062px;">14.04.2026</div>
<div class="ul" style="left:170px;top:526px;width:118px"></div>
<div class="t" style="left:333.63px;top:506.70px;font-size:14px;color:#111;letter-spacing:-0.008px;">1000 PRO LED M927 24* track black structure</div>
<div class="ul" style="left:330px;top:526px;width:309px"></div>
<div class="t" style="left:666.39px;top:506.70px;font-size:14px;color:#111;letter-spacing:-0.067px;">300.000 CZK</div>
<div class="ul" style="left:663px;top:526px;width:103px"></div>
<div class="t" style="left:801.42px;top:506.70px;font-size:14px;color:#111;letter-spacing:-0.110px;">300.000 CZK</div>
<div class="ul" style="left:798px;top:526px;width:104px"></div>
<div class="t" style="left:929.85px;top:506.70px;font-size:14px;color:#111;">0%</div>
<div class="ul" style="left:926px;top:526px;width:104px"></div>
<div class="t" style="left:1057.39px;top:506.70px;font-size:14px;color:#111;letter-spacing:-0.067px;">300.000 CZK</div>
<div class="ul" style="left:1054px;top:526px;width:104px"></div>
<svg style="left:269.5px;top:508.29999999999995px" width="13" height="13" viewBox="0 0 13 13"><g fill="none" stroke="#333" stroke-width="1.100"><rect x=".8" y="2.200" width="11.400" height="10" rx="1.600"/><path d="M.8 5.600h11.400M3.800 .5v2.800M9.200 .5v2.800"/><path d="M3 8.100h2.700M7.300 8.100H10M3 10.300h2.700M7.300 10.300H10" stroke-width=".9"/></g></svg>
</div>
<div class="a" style="left:686px;top:852px;width:73px;height:35px;border-radius:5px;background:#fbfbfb"></div>
<svg style="left:702.500px;top:864.800px" width="6" height="9" viewBox="0 0 6 9" fill="none" stroke="#aaa" stroke-width="1.200"><path d="M5 .6 1 4.500l4 3.900"/></svg>
<div class="t" style="left:716.36px;top:861.41px;font-size:14px;color:#b3b3b3;letter-spacing:-0.199px;">Back</div>
<div class="a g" style="left:768px;top:852.500px;width:32px;height:33px;border-radius:5px"></div>
<div class="t" style="left:779.50px;top:861.41px;font-size:14px;color:#fff;">1</div>
<div class="t" style="left:819.66px;top:861.41px;font-size:14px;color:#111;">2</div>
<div class="t" style="left:859.64px;top:861.41px;font-size:14px;color:#111;">3</div>
<div class="t" style="left:900.04px;top:861.41px;font-size:14px;color:#111;">4</div>
<div class="t" style="left:939.62px;top:861.41px;font-size:14px;color:#111;">5</div>
<div class="t" style="left:1018.66px;top:861.41px;font-size:14px;color:#111;">25</div>
<div class="a" style="left:978.6px;top:868.300px;width:2px;height:2px;border-radius:1px;background:#222"></div>
<div class="a" style="left:982.6px;top:868.300px;width:2px;height:2px;border-radius:1px;background:#222"></div>
<div class="a" style="left:986.6px;top:868.300px;width:2px;height:2px;border-radius:1px;background:#222"></div>
<div class="a g" style="left:1056px;top:851px;width:73px;height:36px;border-radius:5px"></div>
<div class="t" style="left:1067.26px;top:861.41px;font-size:14px;color:#fff;letter-spacing:0.423px;">Next</div>
<svg style="left:1105px;top:864.800px" width="6" height="9" viewBox="0 0 6 9" fill="none" stroke="#fff" stroke-width="1.300"><path d="M1 .6 5 4.500 1 8.400"/></svg>
<div class="a" style="left:1358px;top:852px;width:63px;height:32px;border-radius:5px;background:#fafafa"></div>
<div class="t" style="left:1369.28px;top:860.41px;font-size:14px;color:#111;">20</div>
<svg style="left:1397px;top:865.500px" width="9" height="6" viewBox="0 0 9 6" fill="none" stroke="#999" stroke-width="1.100"><path d="M.6.600 4.500 4.500 8.400.6"/></svg>
<div class="a" style="left:282px;top:909px;width:1142px;height:195px;border:1px solid #c6c6c6;border-radius:13px;background:#fafafa;box-shadow:0 1px 4px rgba(0,0,0,.3)"></div>
<div class="t" style="left:298.40px;top:927.63px;font-size:18px;color:#0c0c0c;letter-spacing:-0.113px;-webkit-text-stroke:0.7px currentColor;">Summary</div>
<svg style="left:1389px;top:934px" width="14" height="8" viewBox="0 0 14 8" fill="none" stroke="#111" stroke-width="1.300"><path d="M.6.600 7 7 13.400.6"/></svg>
<div class="t" style="left:297.37px;top:970.60px;font-size:14px;color:#b9b9b9;letter-spacing:0.031px;">Price without VAT</div>
<div class="t" style="left:298.26px;top:993.60px;font-size:14px;color:#111;letter-spacing:-0.175px;">4.380.000,00 CZK</div>
<div class="t" style="left:458.06px;top:970.60px;font-size:14px;color:#b9b9b9;letter-spacing:-0.280px;transform:scaleX(0.9266);transform-origin:0 0;">VAT</div>
<div class="t" style="left:457.15px;top:993.60px;font-size:14px;color:#111;letter-spacing:-0.102px;">919.800,00 CZK</div>
<div class="t" style="left:616.18px;top:970.60px;font-size:14px;color:#b9b9b9;letter-spacing:0.007px;">Price with VAT</div>
<div class="t" style="left:616.20px;top:993.60px;font-size:14px;color:#111;letter-spacing:-0.070px;">5.299.800,00 CZK</div>
<div class="t" style="left:774.37px;top:970.60px;font-size:14px;color:#b9b9b9;letter-spacing:-0.053px;">Purchase</div>
<div class="t" style="left:774.78px;top:993.60px;font-size:14px;color:#111;letter-spacing:-0.131px;">3.000.000,00 CZK</div>
<div class="t" style="left:933.06px;top:970.60px;font-size:14px;color:#b9b9b9;letter-spacing:0.203px;">Profit</div>
<div class="t" style="left:933.39px;top:993.60px;font-size:14px;color:#111;letter-spacing:-0.087px;">529.980,00 CZK</div>
<div class="t" style="left:1092.23px;top:970.60px;font-size:14px;color:#b9b9b9;letter-spacing:-0.063px;">Profit %</div>
<div class="t" style="left:1092.46px;top:993.60px;font-size:14px;color:#111;letter-spacing:-0.176px;">52%</div>
<div class="t" style="left:1253.15px;top:970.60px;font-size:14px;color:#b9b9b9;letter-spacing:-0.080px;">Total Discount %</div>
<div class="t" style="left:1252.00px;top:993.60px;font-size:14px;color:#111;letter-spacing:-0.280px;transform:scaleX(0.9579);transform-origin:0 0;">52%</div>
<div class="a" style="left:298px;top:1028px;width:1110px;height:1px;background:#b5b5b5"></div>
<div class="a" style="left:298px;top:1054px;width:590px;height:34px;border:1px solid #cfcfcf;border-radius:7px;background:#fafafa"></div>
<div class="t" style="left:305.36px;top:1066.00px;font-size:12px;color:#333;">-</div>
<div class="btn g" style="left:900px;top:1049px;width:107px;height:39px"></div>
<div class="t" style="left:930.42px;top:1061.60px;font-size:14px;color:#fff;letter-spacing:0.459px;">Margin</div>
<div class="btn g" style="left:1019px;top:1049px;width:113px;height:39px"></div>
<div class="t" style="left:1051.09px;top:1061.60px;font-size:14px;color:#fff;letter-spacing:0.073px;">Amount</div>
<div class="btn g" style="left:1144px;top:1049px;width:133px;height:39px"></div>
<div class="t" style="left:1175.15px;top:1061.60px;font-size:14px;color:#fff;letter-spacing:-0.114px;">Discount %</div>
<div class="btn g" style="left:1289px;top:1049px;width:119px;height:39px"></div>
<div class="t" style="left:1320.07px;top:1061.60px;font-size:14px;color:#fff;letter-spacing:0.134px;">Discount</div>
<div class="a" style="left:1140px;top:1126px;width:134px;height:39px;border:1px solid #dcdcdc;border-radius:7px;background:#fff"></div>
<div class="t" style="left:1188.57px;top:1138.60px;font-size:14px;color:#111;letter-spacing:0.221px;">Close</div>
<div class="a g" style="left:1290.500px;top:1127px;width:132.500px;height:37px;border-radius:6px"></div>
<div class="t" style="left:1341.03px;top:1138.60px;font-size:14px;color:#fff;letter-spacing:-0.302px;">Save</div>
</div>
</body></html>
